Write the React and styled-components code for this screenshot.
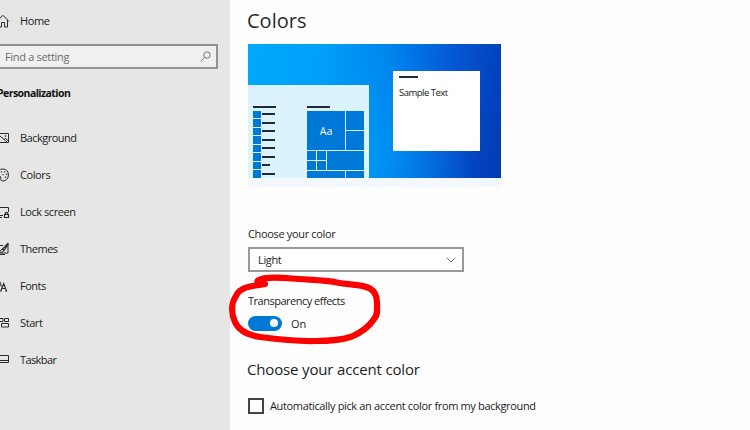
import React from "react";
import styled, { createGlobalStyle } from "styled-components";

const GlobalStyle = createGlobalStyle`
  *, *::before, *::after { box-sizing: border-box; }
  html, body { margin: 0; padding: 0; background: #fefefe; overflow: hidden; }
  body { font-family: "Open Sans", "Noto Sans", sans-serif; font-size: 11px; color: #1c1c1c; }
`;

const Window = styled.div`
  position: relative;
  display: flex;
  width: 750px;
  height: 430px;
  overflow: hidden;
  background: #fefefe;
`;

const Sidebar = styled.nav`
  width: 230px;
  flex: none;
  overflow: hidden;
  background: #e6e6e6;
`;

const NavRow = styled.div`
  display: flex;
  align-items: center;
  height: 37px;
  gap: 10px;
`;

const HomeRow = styled(NavRow)`
  height: 42px;
`;

const NavIcon = styled.svg`
  flex: none;
  width: 14px;
  height: 14px;
  margin-left: -4px;
  fill: none;
  stroke: #2b2b2b;
  stroke-width: 1;
`;

const Label = styled.span`
  line-height: 16px;
  white-space: nowrap;
  letter-spacing: ${(p) => p.$track || 0}px;
`;

const SearchBox = styled.div`
  display: flex;
  align-items: center;
  justify-content: space-between;
  width: 220px;
  height: 25px;
  margin: 2px 0 0 -2px;
  padding: 0 5px;
  border: 2px solid #929292;
  background: #f0f0f0;
  color: #6c6c6c;
`;

const SearchIcon = styled.svg`
  width: 11px;
  height: 11px;
  fill: none;
  stroke: #777;
`;

const Section = styled.div`
  height: 50px;
  margin-left: -3px;
  padding-top: 16px;
  font-weight: 700;
  font-size: 10.5px;
  line-height: 16px;
  color: #111;
  letter-spacing: ${(p) => p.$track || 0}px;
`;

const Main = styled.main`
  flex: 1;
  padding-left: 18px;
`;

const Title = styled.h1`
  margin: 0;
  padding-top: 7px;
  height: 44px;
  font-size: 20px;
  line-height: 28px;
  font-weight: 400;
  color: #2a2a2a;
  margin-left: -1px;
  letter-spacing: ${(p) => p.$track || 0}px;
`;

const Preview = styled.div`
  width: 253px;
  height: 143px;
  background: #f3f8fe;
`;

const Desktop = styled.div`
  display: flex;
  justify-content: space-between;
  height: 134px;
  padding: 27px 21px 0 0;
  background:
    radial-gradient(ellipse 100px 120px at 48% 85%, rgba(0, 160, 252, 0.65), rgba(0, 150, 255, 0) 100%),
    linear-gradient(99deg, #00a8fa 0%, #00a0f8 28%, #0080ec 54%, #0458d4 76%, #0342be 92%, #033ab4 100%);
`;

const StartPanel = styled.div`
  display: flex;
  width: 121px;
  height: 93px;
  margin-top: 14px;
  padding: 21px 0 0 5px;
  background: #dbf2ff;
`;

const Dash = styled.div`
  flex: none;
  width: ${(p) => p.$w}px;
  height: 2px;
  background: #202a32;
`;

const AppList = styled.div`
  width: 54px;
`;

const AppRow = styled.div`
  display: flex;
  align-items: center;
  gap: 1px;
  height: 8.5px;
`;

const AppTile = styled.div`
  width: 8px;
  height: 7.5px;
  background: #0078d7;
`;

const AppRows = styled.div`
  height: 70px;
  margin-top: 2px;
  overflow: hidden;
`;

const TileGrid = styled.div`
  display: grid;
  width: 57px;
  height: 67px;
  margin-top: 3px;
  gap: 1px;
  grid-template-columns: 9px 9px 18px 18px;
  grid-template-rows: 19px 19px 9px 9px 7px;
`;

const Tile = styled.div`
  display: flex;
  align-items: center;
  justify-content: center;
  grid-area: ${(p) => p.$area};
  background: #0078d7;
  color: #fff;
  font-size: 10.5px;
`;

const SampleWindow = styled.div`
  width: 87px;
  height: 80px;
  padding: 5px 6px;
  background: #fff;
  font-size: 9.5px;
`;

const SampleText = styled.div`
  margin-top: 8px;
  line-height: 14px;
  white-space: nowrap;
  letter-spacing: ${(p) => p.$track || 0}px;
`;

const Field = styled.div`
  display: flex;
  flex-direction: column;
  padding-top: 39px;
`;

const Select = styled.div`
  display: flex;
  align-items: center;
  justify-content: space-between;
  width: 216px;
  height: 25px;
  margin-top: 5px;
  padding: 0 6px 0 8px;
  border: 2px solid #999;
  background: #fff;
`;

const Chevron = styled.svg`
  width: 10px;
  height: 6px;
  fill: none;
  stroke: #777;
`;

const ToggleField = styled.div`
  display: flex;
  flex-direction: column;
  padding-top: 21px;
`;

const ToggleRow = styled.div`
  display: flex;
  align-items: center;
  gap: 9px;
  height: 16px;
  margin-top: 6px;
`;

const ToggleState = styled(Label)`
  padding-top: 2px;
`;

const Toggle = styled.div`
  display: flex;
  align-items: center;
  justify-content: flex-end;
  width: 34px;
  height: 15px;
  padding-right: 4px;
  border-radius: 8px;
  background: #0078d7;
`;

const Knob = styled.div`
  width: 8px;
  height: 8px;
  border-radius: 50%;
  background: #fff;
`;

const Heading = styled.h2`
  margin: 26px 0 0 -1px;
  font-size: 15px;
  line-height: 24px;
  font-weight: 400;
  letter-spacing: ${(p) => p.$track || 0}px;
`;

const CheckRow = styled.div`
  display: flex;
  align-items: center;
  gap: 6px;
  height: 16px;
  margin-top: 17px;
`;

const Checkbox = styled.div`
  width: 16px;
  height: 16px;
  border: 2px solid #444;
  background: #fff;
`;

const Marker = styled.svg`
  position: absolute;
  left: 0;
  top: 0;
  width: 750px;
  height: 430px;
  pointer-events: none;
  fill: none;
  stroke: #fe0000;
  stroke-width: 6.2;
  stroke-linecap: round;
  stroke-linejoin: round;
`;

const icons = {
  home: <path d="M.5 7.500 7 1.300l6 6.200M2.500 6v7h3V8.500h3V13h3V6" />,
  picture: (
    <>
      <path d="M.5 2.500h12v9H.5z" />
      <path d="m1 8 3-3 7.500 6.500M8 8.500l1.500-1 3 2.500" />
      <circle cx="9.500" cy="5" r=".5" />
    </>
  ),
  palette: (
    <>
      <path d="M7 1C3.500 1 .8 3.600 1 6.500c.2 1.500 2.500 1.200 3.300 1.800 1 .8 0 2.500.7 3.800.7 1.200 3 .9 4.300.3C13.800 10.500 13.800 1 7 1z" />
      <path d="M5.500 3.300v1.300M8.800 3.300v1.300M10.600 5.700v1.300M9.500 8.500v1.300M7 6v1.300" strokeWidth="1.300" />
    </>
  ),
  lock: (
    <>
      <path d="M7 10.500H.5v-8h12V7M3 12.500h3" />
      <path d="M8.500 9.500h4v3h-4zM9.300 9.500V8.200q1.200-1.700 2.400 0v1.300" strokeWidth="1.200" />
    </>
  ),
  themes: (
    <>
      <path d="M7 3.500H.5v7.500h11.500V3" />
      <path d="M11.900 1.500 6.500 7l1.500 1.500 4.300-6.500z" strokeWidth="1.200" />
      <path d="M6.500 7.200c-2 0-1.500 2.300-3.500 2.600 2 1 4.500.5 4.900-1.400M3 7l1.500 1.500M4 12.500h5" />
    </>
  ),
  fonts: (
    <>
      <path d="m1 9 2.500-7L5.500 7.500M2 6.500h2.500" />
      <path d="m4.800 12 2.900-7.500L10.500 12M5.800 9.500h4M4 12h1.800M9.200 12h2" strokeWidth="1.150" />
    </>
  ),
  start: (
    <path d="M.5 2.500h6.500v3H.5zM8.500 2.500h4v3h-4zM.5 7.500h3v3.500h-3zM5.500 7.500h7v3.500h-7z" />
  ),
  taskbar: <path d="M0 2.500h12.500v7H0zM0 7.500h12.500" />,
};

const navItems = [
  ["picture", "Background", -0.5],
  ["palette", "Colors", -0.4],
  ["lock", "Lock screen", -0.45],
  ["themes", "Themes", -0.5],
  ["fonts", "Fonts", -0.5],
  ["start", "Start", -0.4],
  ["taskbar", "Taskbar", -0.6],
];

const appWidths = [13, 13, 13, 13, 13, 13, 8, 13];

const tiles = [
  "1 / 1 / 3 / 4",
  "1 / 4 / 2 / 5",
  "2 / 4 / 3 / 5",
  "3 / 1 / 4 / 2",
  "3 / 2 / 4 / 3",
  "4 / 1 / 5 / 2",
  "4 / 2 / 5 / 3",
  "3 / 3 / 5 / 5",
  "5 / 1 / 6 / 4",
  "5 / 4 / 6 / 5",
];

export default function App() {
  return (
    <>
      <GlobalStyle />
      <Window>
        <Sidebar>
          <HomeRow>
            <NavIcon viewBox="0 0 14 14">{icons.home}</NavIcon>
            <Label $track={-0.4}>Home</Label>
          </HomeRow>
          <SearchBox>
            <Label $track={-0.32}>Find a setting</Label>
            <SearchIcon viewBox="0 0 11 11">
              <circle cx="7" cy="4" r="3.200" />
              <path d="M4.700 6.300.7 10.300" />
            </SearchIcon>
          </SearchBox>
          <Section $track={-0.55}>Personalization</Section>
          {navItems.map(([icon, text, track]) => (
            <NavRow key={text}>
              <NavIcon viewBox="0 0 14 14">{icons[icon]}</NavIcon>
              <Label $track={track}>{text}</Label>
            </NavRow>
          ))}
        </Sidebar>
        <Main>
          <Title>Colors</Title>
          <Preview>
            <Desktop>
              <StartPanel>
                <AppList>
                  <Dash $w={23} />
                  <AppRows>
                    {appWidths.map((w, i) => (
                      <AppRow key={i}>
                        <AppTile />
                        <Dash $w={w} />
                      </AppRow>
                    ))}
                  </AppRows>
                </AppList>
                <div>
                  <Dash $w={23} />
                  <TileGrid>
                    {tiles.map((area, i) => (
                      <Tile key={area} $area={area}>
                        {i === 0 ? "Aa" : null}
                      </Tile>
                    ))}
                  </TileGrid>
                </div>
              </StartPanel>
              <SampleWindow>
                <Dash $w={19} />
                <SampleText $track={-0.5}>Sample Text</SampleText>
              </SampleWindow>
            </Desktop>
          </Preview>
          <Field>
            <Label $track={-0.34}>Choose your color</Label>
            <Select>
              <Label $track={-0.35}>Light</Label>
              <Chevron viewBox="0 0 10 6">
                <path d="m.7.7 4.300 4.300L9.300.7" />
              </Chevron>
            </Select>
          </Field>
          <ToggleField>
            <Label $track={-0.5}>Transparency effects</Label>
            <ToggleRow>
              <Toggle>
                <Knob />
              </Toggle>
              <ToggleState>On</ToggleState>
            </ToggleRow>
          </ToggleField>
          <Heading $track={-0.16}>Choose your accent color</Heading>
          <CheckRow>
            <Checkbox />
            <Label $track={-0.35}>Automatically pick an accent color from my background</Label>
          </CheckRow>
        </Main>
        <Marker viewBox="0 0 750 430">
          <path d="M265 284C260 285 256 282 258 280.500C263 277 280 277.500 292 278.500C310 280 325 280 337 282.500C349 285 362 284 370 288.500C376 292 377 297 377 303C377 310 378 315 374 319C369 327 362 332 352 336.500C342 340 329 341 315 341C298 341.500 275 339 260 337C250 335.500 239 331 235 322C231 314 231 303 236 296C240 287 251 286 265 284" />
        </Marker>
      </Window>
    </>
  );
}
